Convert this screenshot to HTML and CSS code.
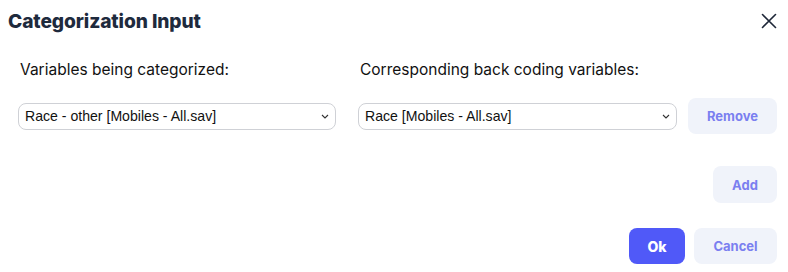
FILE: index.html
```html
<!DOCTYPE html>
<html lang="en">
<head>
<meta charset="utf-8">
<title>Categorization Input</title>
<link rel="stylesheet" href="styles.css">
</head>
<body>
<div class="dialog">
  <header class="dialog-header">
    <h1 class="dialog-title">Categorization Input</h1>
    <button class="close-btn" aria-label="Close">
      <svg width="16" height="16" viewBox="0 0 16 16"><path d="M1.5 1.5 L14.5 14.5 M14.5 1.5 L1.5 14.5" stroke="#1e2738" stroke-width="1.6" stroke-linecap="round" fill="none"/></svg>
    </button>
  </header>
  <div class="labels">
    <div class="field-label col-a">Variables being categorized:</div>
    <div class="field-label col-b">Corresponding back coding variables:</div>
  </div>
  <div class="pair-row">
    <select class="var-select col-a"><option>Race - other [Mobiles - All.sav]</option></select>
    <select class="var-select col-b"><option>Race [Mobiles - All.sav]</option></select>
    <button class="btn btn-soft btn-remove">Remove</button>
  </div>
  <div class="add-row">
    <button class="btn btn-soft btn-add">Add</button>
  </div>
  <footer class="dialog-footer">
    <button class="btn btn-primary btn-ok">Ok</button>
    <button class="btn btn-soft btn-cancel">Cancel</button>
  </footer>
</div>
</body>
</html>
```
FILE: styles.css
```css
* { box-sizing: border-box; }
html, body { margin: 0; padding: 0; background: #ffffff; }
body {
  font-family: "Inter", "Noto Sans", sans-serif;
  color: #1a1a1a;
  width: 788px;
  height: 272px;
  overflow: hidden;
}
.dialog {
  padding: 0 11px 0 18px;
}
.dialog-header {
  display: flex;
  align-items: center;
  justify-content: space-between;
  height: 42px;
  margin-left: -10px;
}
.dialog-title {
  margin: 0;
  font-size: 19.2px;
  font-weight: 800;
  color: #1e2a3d;
  letter-spacing: -0.1px;
}
.close-btn {
  border: 0;
  background: transparent;
  padding: 0;
  width: 16px;
  height: 16px;
  display: flex;
}
.labels {
  display: flex;
  gap: 22px;
  margin-top: 14px;
  height: 28px;
}
.col-a { width: 318px; }
.col-b { width: 319px; }
.field-label {
  font-size: 15.5px;
  color: #111111;
  padding-left: 2px;
  line-height: 28px;
}
.pair-row {
  display: flex;
  align-items: center;
  margin-top: 14px;
}
.var-select {
  appearance: none;
  -webkit-appearance: none;
  height: 27px;
  border: 1px solid #cfd1d6;
  border-radius: 8px;
  background: #ffffff url("data:image/svg+xml;utf8,<svg xmlns='http://www.w3.org/2000/svg' width='8' height='5' viewBox='0 0 8 5'><path d='M1 1 L4 4 L7 1' stroke='%23333' stroke-width='1.1' fill='none'/></svg>") no-repeat right 6px center;
  font-family: "Liberation Sans", Arial, sans-serif;
  font-size: 14.1px;
  color: #111;
  padding: 0 20px 0 6px;
}
.var-select.col-b { margin-left: 22px; }
.btn {
  border: 0;
  border-radius: 8px;
  font-family: "Inter", "Noto Sans", sans-serif;
  font-weight: 700;
  font-size: 13px;
  height: 36px;
  padding: 0;
}
.btn-soft {
  background: #f0f3fa;
  color: #7a7ff0;
}
.btn-primary {
  background: #5059f8;
  color: #ffffff;
  font-size: 14px;
  font-weight: 800;
}
.btn-remove { width: 89px; margin-left: 11px; }
.add-row {
  display: flex;
  justify-content: flex-end;
  margin-top: 32px;
}
.btn-add { width: 64px; height: 37px; }
.dialog-footer {
  display: flex;
  justify-content: flex-end;
  gap: 9px;
  margin-top: 25px;
}
.btn-ok { width: 56px; }
.btn-cancel { width: 83px; }
```
